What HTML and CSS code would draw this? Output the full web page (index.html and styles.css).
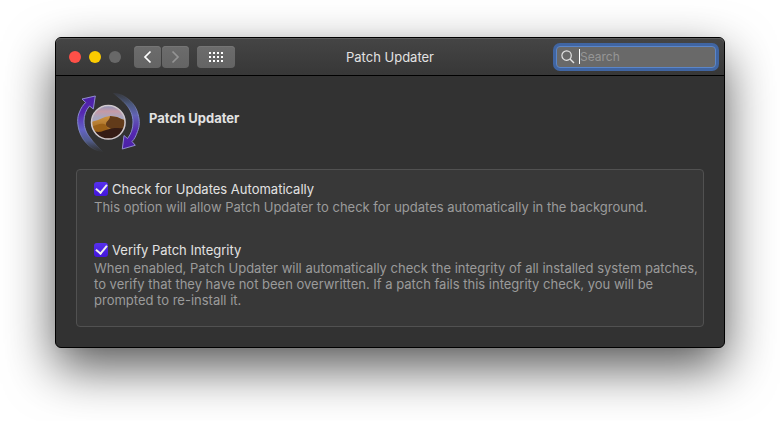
FILE: index.html
```html
<!DOCTYPE html>
<html lang="en">
<head>
<meta charset="UTF-8" />
<meta name="viewport" content="width=device-width, initial-scale=1" />
<title>Patch Updater</title>
<link rel="stylesheet" href="styles.css">
</head>
<body>
<div class="window">
  <header class="titlebar">
    <div class="controls">
      <div class="lights">
        <button type="button" class="light close" aria-label="Close"></button>
        <button type="button" class="light minimize" aria-label="Minimize"></button>
        <button type="button" class="light zoom" aria-label="Zoom" disabled></button>
      </div>
      <div class="nav">
        <button type="button" class="tool" aria-label="Back">
          <svg width="9" height="14" viewBox="0 0 9 14"><path d="M7.500 1.500L2 7l5.500 5.500" fill="none" stroke="#fff" stroke-width="1.700"/></svg>
        </button>
        <button type="button" class="tool" aria-label="Forward" disabled>
          <svg width="9" height="14" viewBox="0 0 9 14"><path d="M1.500 1.500L7 7l-5.500 5.500" fill="none" stroke="#949494" stroke-width="1.700"/></svg>
        </button>
      </div>
      <button type="button" class="tool show-all" aria-label="Show All">
        <svg width="14" height="10" viewBox="0 0 14 10" fill="none" stroke="#fff" stroke-width="2" stroke-dasharray="2 2"><path d="M0 1h14M0 5h14M0 9h14"/></svg>
      </button>
    </div>
    <h1 class="title">Patch Updater</h1>
    <label class="search">
      <svg width="14" height="14" viewBox="0 0 14 14" fill="none" stroke="#e4e4e4"><circle cx="5.6" cy="5.6" r="4.7" stroke-width="1.2"/><path d="M9 9l4 4" stroke-width="1.5"/></svg>
      <span class="caret"></span>
      <input type="text" placeholder="Search" aria-label="Search" />
    </label>
  </header>

  <main class="content">
    <div class="heading">
      <svg class="logo" width="64" height="64" viewBox="0 0 64 64">
        <defs>
          <linearGradient id="arcLeft" x1="0" y1="0" x2="0" y2="1">
            <stop offset="0" stop-color="#4b1fa8"/>
            <stop offset=".3" stop-color="#5528b0"/>
            <stop offset=".6" stop-color="#6262c4"/>
            <stop offset=".8" stop-color="#5967a4" stop-opacity=".8"/>
            <stop offset="1" stop-color="#4a5574" stop-opacity="0"/>
          </linearGradient>
          <linearGradient id="arcRight" x1="0" y1="1" x2="0" y2="0">
            <stop offset="0" stop-color="#4b1fa8"/>
            <stop offset=".3" stop-color="#5528b0"/>
            <stop offset=".6" stop-color="#6262b4"/>
            <stop offset=".8" stop-color="#526392" stop-opacity=".8"/>
            <stop offset="1" stop-color="#4a5574" stop-opacity=".2"/>
          </linearGradient>
          <linearGradient id="edgeLeft" x1="0" y1="0" x2="0" y2="1">
            <stop offset="0" stop-color="#928cce"/>
            <stop offset=".6" stop-color="#7f88c6"/>
            <stop offset="1" stop-color="#6c7898" stop-opacity="0"/>
          </linearGradient>
          <linearGradient id="edgeRight" x1="0" y1="1" x2="0" y2="0">
            <stop offset="0" stop-color="#928cce"/>
            <stop offset=".6" stop-color="#7f88c6"/>
            <stop offset="1" stop-color="#6c7898" stop-opacity="0"/>
          </linearGradient>
          <linearGradient id="sky" x1="0" y1="0" x2="0" y2="1">
            <stop offset="0" stop-color="#8793bd"/>
            <stop offset=".18" stop-color="#c59aa6"/>
            <stop offset=".35" stop-color="#a8a5bd"/>
          </linearGradient>
          <linearGradient id="dune" x1="0" y1="0" x2="0" y2="1">
            <stop offset="0" stop-color="#cf9440"/>
            <stop offset="1" stop-color="#7c4a14"/>
          </linearGradient>
          <clipPath id="disc"><circle cx="32.300" cy="31.300" r="16.500"/></clipPath>
        </defs>
        <path d="M27 61C20 60 15 57 12 54C8 50 6 47 4 42C1 34 1 26 3.500 21C5 17 7 14 9.700 11.500L6 8L19.300 5L17.300 18L13.500 15C10 19 8 24 8 30C8 36 10 42 14 46.500C18 52 22 56 27 61Z" fill="url(#arcLeft)" stroke="url(#edgeLeft)"/>
        <path d="M37 2C44 2 49 5 54 9.500C58 13 61 18 62 23C64 30 63.500 36 61.500 40.500C60 45 58.500 48 56 50.500L59.300 54.300L46.300 58L48 44.500L51.500 47.500C55 43 57 38 57 31C57 24 54 18 50 13.500C46 9 42 6 37 2Z" fill="url(#arcRight)" stroke="url(#edgeRight)"/>
        <g clip-path="url(#disc)">
          <path d="M15 14h35v35H15z" fill="url(#sky)"/>
          <path d="M15 31l7-2 7-3 5-1 7 1 4 2 5 1v20H15z" fill="url(#dune)"/>
          <path d="M34 25l7 1 9 4v19H25c8-3 13-6 11-10-2-3-7-3-6-6 0-3 4-4 4-8z" fill="#623b1a"/>
          <path d="M15 36c6-2 9-4 13-3 5 2 2 5 6 7 4 1 9-2 16-1v10H15z" fill="#9b6118"/>
          <path d="M15 40c5 0 7 2 12 0 6-2 9-3 13-3s8 1 10 0v12H15z" fill="#351c15"/>
        </g>
        <circle cx="32.300" cy="31.300" r="16.800" fill="none" stroke="#cfc8cd" stroke-width="1.500"/>
      </svg>
      <h2 class="name">Patch Updater</h2>
    </div>

    <form class="options">
      <div class="option">
        <label class="option-label"><input type="checkbox" class="check" aria-describedby="updates-text" checked />Check for Updates Automatically</label>
        <p class="option-text" id="updates-text">This option will allow Patch Updater to check for updates automatically in the background.</p>
      </div>
      <div class="option">
        <label class="option-label"><input type="checkbox" class="check" aria-describedby="verify-text" checked />Verify Patch Integrity</label>
        <p class="option-text" id="verify-text">When enabled, Patch Updater will automatically check the integrity of all installed system patches, to verify that they have not been overwritten. If a patch fails this integrity check, you will be prompted to re-install it.</p>
      </div>
    </form>
  </main>
</div>
</body>
</html>
```

FILE: styles.css
```css
* { box-sizing: border-box; }
body { margin: 0; min-height: 100vh; padding: 37px 55px; background: #fff; font-family: Inter, "Liberation Sans", sans-serif; font-size: 13px; line-height: 16px; color: #e2e2e2; }
h1, h2, p { margin: 0; }
button { padding: 0; border: 0; }
svg { display: block; }

.window { border: 1px solid #000; border-radius: 6px; background: #323232; box-shadow: 0 20px 50px rgba(0, 0, 0, 0.65), 0 0 10px rgba(0, 0, 0, 0.05); }

/* title bar */
.titlebar { display: grid; grid-template-columns: 1fr auto 1fr; align-items: center; height: 38px; padding: 0 8px; border-bottom: 1px solid #000; border-radius: 5px 5px 0 0; background: linear-gradient(#454545, #373737); box-shadow: inset 0 1px #5c5c5c; }
.controls { display: flex; align-items: center; gap: 8px; }
.lights { display: flex; gap: 8px; margin: 0 5px; }
.light { width: 12px; height: 12px; border-radius: 50%; }
.close { background: #ff5048; }
.minimize { background: #fccc00; }
.zoom { background: #686868; }
.nav { display: flex; gap: 1px; }
.tool { display: flex; align-items: center; justify-content: center; width: 27px; height: 22px; border-radius: 4px; background: linear-gradient(#6c6c6c, #646464); box-shadow: inset 0 1px #757575; }
.show-all { width: 38px; }
.title { font-size: 13px; font-weight: 400; }
.search { display: flex; align-items: center; justify-self: end; width: 160px; height: 22px; padding-left: 4px; border: 1px solid #5b86c9; border-radius: 4px; background: #696969; box-shadow: 0 0 0 3px #4065a2; }
.caret { width: 1px; height: 15px; margin-left: 4px; background: #fff; }
.search input { flex: 1; min-width: 0; padding: 0; border: 0; outline: 0; background: none; color: #fff; font: inherit; font-size: 12px; }
.search input::placeholder { color: #969696; }

/* pane */
.content { padding: 15px 20px 20px; }
.heading { display: flex; align-items: center; gap: 9px; margin-bottom: 14px; }
.name { padding-bottom: 10px; font-size: 13px; font-weight: 700; }
.options { display: grid; gap: 26px; padding: 10px 4px 18px 17px; border: 1px solid #515151; border-radius: 4px; background: #383838; }
.option-label { display: flex; align-items: center; gap: 4px; height: 18px; margin-bottom: 1px; }
.option-text { color: #9b9b9b; }
.check { appearance: none; display: flex; align-items: center; justify-content: center; width: 14px; height: 14px; margin: 0; border-radius: 3px; background: linear-gradient(#5631ed, #4315dc); }
.check:checked::before { content: ""; width: 5px; height: 9px; margin-bottom: 3px; border: solid #eee; border-width: 0 2px 2px 0; transform: rotate(40deg); }
```
